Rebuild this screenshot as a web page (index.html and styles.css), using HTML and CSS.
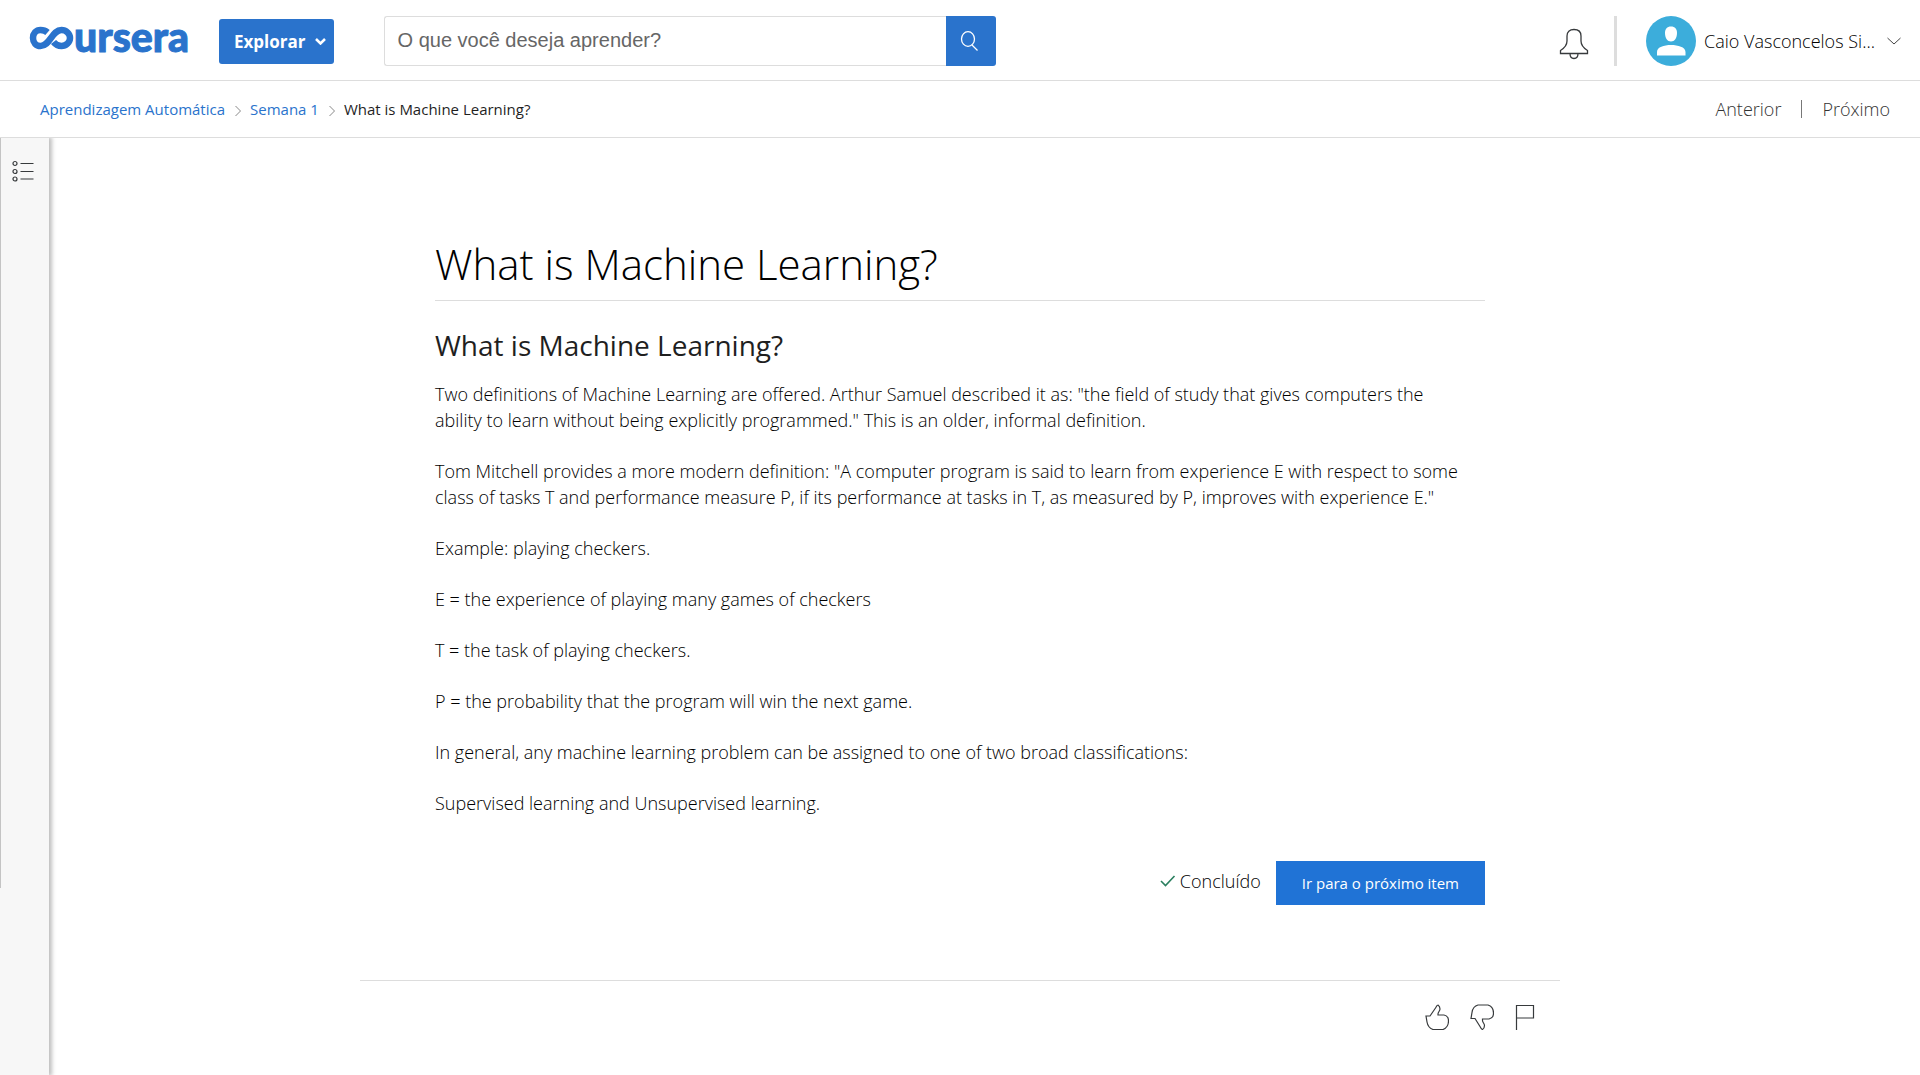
FILE: index.html
```html
<!DOCTYPE html>
<html lang="pt-BR">
<head>
<meta charset="utf-8">
<meta name="viewport" content="width=device-width, initial-scale=1">
<title>What is Machine Learning? | Coursera</title>
<link rel="stylesheet" href="styles.css">
</head>
<body>
<header class="topbar">
  <a class="logo" href="#" aria-label="Coursera">
    <svg class="logo-mark" width="45" height="24" viewBox="0 0 45 24" fill="none" stroke="currentColor" stroke-width="6.500" aria-hidden="true">
      <path d="M18.500 6.500C16.500 4.700 14 4 11.500 4C7 4 4 7.500 4 12C4 16.500 7 20 11.500 20C21 20 23 4 32.500 4C37 4 41 7.500 41 12C41 16.500 37 20 32.500 20C29 20 26.500 18.500 24.500 16"/>
    </svg><span class="logo-text">ursera</span>
  </a>
  <button class="explore" type="button">Explorar
    <svg width="11" height="8" viewBox="0 0 11 8" fill="none" stroke="currentColor" stroke-width="2.500" aria-hidden="true"><path d="M1 2L5.500 6.500L10 2"/></svg>
  </button>
  <form class="search" role="search">
    <input class="search-input" type="text" placeholder="O que você deseja aprender?" aria-label="O que você deseja aprender?">
    <button class="search-button" type="button" aria-label="Pesquisar">
      <svg width="20" height="22" viewBox="0 0 20 22" fill="none" stroke="currentColor" stroke-width="1.300" aria-hidden="true"><ellipse cx="8" cy="9" rx="6.500" ry="7.300"/><path d="M12 15L17.500 20.500"/></svg>
    </button>
  </form>
  <div class="account">
    <button class="plain bell" type="button" aria-label="Notificações">
      <svg width="30" height="32" viewBox="0 0 30 32" fill="none" stroke="currentColor" stroke-width="1.300" aria-hidden="true"><path d="M1.500 25.500V22.500C5.500 20 8 17 8 13V8C8 4 10.500 1.500 15 1.500S22 4 22 8V13C22 17 24.500 20 28.500 22.500V25.500ZM11 25.500C11 28.500 12.500 30.500 15 30.500S19 28.500 19 25.500"/></svg>
    </button>
    <span class="divider"></span>
    <button class="plain user" type="button">
      <svg width="50" height="50" viewBox="0 0 50 50" aria-hidden="true"><circle cx="25" cy="25" r="25" fill="#3caddb"/><path fill="#fff" d="M25 10.500C29 10.500 31 13 31 17C31 22 28.500 25.500 25 25.500S19 22 19 17C19 13 21 10.500 25 10.500ZM11 39.500V36C11 31 18 29 25 29S39.500 31 39.500 36V39.500Z"/></svg>
      <span class="user-name">Caio Vasconcelos Si...</span>
      <svg width="14" height="8" viewBox="0 0 14 8" fill="none" stroke="#444" aria-hidden="true"><path d="M.5 1L7 7L13.500 1"/></svg>
    </button>
  </div>
</header>

<div class="subbar">
  <nav class="crumbs" aria-label="Navegação estrutural">
    <a href="#">Aprendizagem Automática</a>
    <svg class="crumb-arrow" width="7" height="12" viewBox="0 0 7 12" aria-hidden="true"><path d="M1.500 1L6.500 6L1.500 11"/></svg>
    <a href="#">Semana 1</a>
    <svg class="crumb-arrow" width="7" height="12" viewBox="0 0 7 12" aria-hidden="true"><path d="M1.500 1L6.500 6L1.500 11"/></svg>
    <span>What is Machine Learning?</span>
  </nav>
  <nav class="pager" aria-label="Itens">
    <a href="#">Anterior</a>
    <span class="pager-line"></span>
    <a href="#">Próximo</a>
  </nav>
</div>

<div class="workspace">
  <aside class="rail">
    <button class="plain rail-button" type="button" aria-label="Abrir menu do curso">
      <svg width="22" height="22" viewBox="0 0 22 22" fill="none" stroke="currentColor" stroke-width="1.200" aria-hidden="true"><circle cx="3" cy="3.500" r="2"/><circle cx="3" cy="11.500" r="2"/><circle cx="3" cy="19" r="2"/><path d="M8.500 3.500H21.500M8.500 11.500H21.500M8.500 19H21.500"/></svg>
    </button>
  </aside>
  <main class="page">
    <article class="reading">
      <h1>What is Machine Learning?</h1>
      <h2>What is Machine Learning?</h2>
      <p>Two definitions of Machine Learning are offered. Arthur Samuel described it as: "the field of study that gives computers the ability to learn without being explicitly programmed." This is an older, informal definition.</p>
      <p>Tom Mitchell provides a more modern definition: "A computer program is said to learn from experience E with respect to some class of tasks T and performance measure P, if its performance at tasks in T, as measured by P, improves with experience E."</p>
      <p>Example: playing checkers.</p>
      <p>E = the experience of playing many games of checkers</p>
      <p>T = the task of playing checkers.</p>
      <p>P = the probability that the program will win the next game.</p>
      <p>In general, any machine learning problem can be assigned to one of two broad classifications:</p>
      <p>Supervised learning and Unsupervised learning.</p>
      <div class="complete">
        <span class="done"><svg width="16" height="12" viewBox="0 0 16 12" fill="none" stroke="#2a7f5f" stroke-width="1.600" aria-hidden="true"><path d="M1 6L5.500 10.500L14.500 1"/></svg>Concluído</span>
        <button class="next" type="button">Ir para o próximo item</button>
      </div>
    </article>
    <div class="feedback">
      <button class="plain" type="button" aria-label="Gostei">
        <svg width="24" height="26" viewBox="0 0 24 26" aria-hidden="true"><path d="M1 12H5L10.500 4C11.500 2 12 1 13 1C14.500 2 15 3 15 5C15 7 13 8 13 10V11H19C22 11.500 23.500 14 23.500 17C23.500 21 21 24.500 18 25.500H8C4 24 2.500 21 2 18Z"/></svg>
      </button>
      <button class="plain" type="button" aria-label="Não gostei">
        <svg width="24" height="26" viewBox="0 0 24 26" aria-hidden="true"><path d="M1 14.500H5L10 22.500C11 24.500 11.500 25.500 12.500 25.500C14 24.500 14.500 23.500 14.500 21.500C14.500 19.500 12.500 18.500 12.500 16.500V15H19C22 14.500 23.500 12 23.500 9C23.500 5 21 2 18 1H8C4 2 2.500 5 2 8.500Z"/></svg>
      </button>
      <button class="plain" type="button" aria-label="Sinalizar">
        <svg width="20" height="26" viewBox="0 0 20 26" aria-hidden="true"><path d="M1.500 26V1.500H18.500V14H1.500"/></svg>
      </button>
    </div>
  </main>
</div>
</body>
</html>
```
FILE: styles.css
```css
* {
  box-sizing: border-box;
}

body {
  display: flex;
  flex-direction: column;
  min-height: 100vh;
  margin: 0;
  background: #fff;
  color: #000;
  font-family: "Open Sans", "Noto Sans", sans-serif;
  font-size: 18px;
  font-weight: 300;
  line-height: 26px;
}

a {
  color: #2a73cc;
  text-decoration: none;
}

button {
  border: 0;
  font-family: inherit;
  cursor: pointer;
}

svg {
  display: block;
  flex: none;
}

.plain {
  padding: 0;
  background: none;
  color: #373a3c;
}

.topbar {
  display: flex;
  align-items: center;
  padding: 16px 19px 14px 29px;
  border-bottom: 1px solid #ddd;
}

.logo {
  display: flex;
  align-items: flex-end;
  width: 190px;
  padding-bottom: 8px;
}

.logo-text {
  font-family: Lato, sans-serif;
  font-size: 41px;
  font-weight: 900;
  line-height: 40px;
  -webkit-text-stroke: 1px currentColor;
}

.logo-mark {
  margin-bottom: 7px;
}

.explore {
  display: flex;
  align-items: center;
  gap: 9px;
  height: 45px;
  padding: 0 8px 0 15px;
  border-radius: 3px;
  background: #2a73cc;
  color: #fff;
  font-size: 17px;
  font-weight: 700;
}

.search {
  display: flex;
  width: 612px;
  height: 50px;
  margin-left: 50px;
}

.search-input {
  flex: 1;
  min-width: 0;
  padding: 0 13px 2px;
  border: 1px solid #ddd;
  border-right: 0;
  border-radius: 3px 0 0 3px;
  font-family: "Liberation Sans", Arial, sans-serif;
  font-size: 20px;
}

.search-input::placeholder {
  color: #666;
  opacity: 1;
}

.search-button {
  display: flex;
  align-items: center;
  justify-content: center;
  width: 50px;
  padding: 0 2px 0 0;
  border-radius: 0 3px 3px 0;
  background: #2a73cc;
  color: #fff;
}

.account {
  display: flex;
  align-items: center;
  margin-left: auto;
}

.bell {
  padding-top: 6px;
}

.divider {
  width: 3px;
  height: 50px;
  margin: 0 29px 0 25px;
  background: #ddd;
}

.user {
  display: flex;
  align-items: center;
  color: #000;
  font-size: 18px;
  font-weight: 300;
}

.user-name {
  margin: 0 12px 0 8px;
}

.subbar {
  display: flex;
  align-items: center;
  justify-content: space-between;
  height: 57px;
  padding: 0 30px 0 40px;
  border-bottom: 1px solid #ddd;
}

.crumbs {
  display: flex;
  align-items: center;
  gap: 9px;
  color: #1f1f1f;
  font-size: 15px;
  font-weight: 400;
}

.crumb-arrow {
  margin-top: 4px;
  fill: none;
  stroke: #888;
}

.pager {
  display: flex;
  align-items: center;
  gap: 20px;
}

.pager a {
  color: #333;
}

.pager-line {
  width: 1px;
  height: 18px;
  background: #777;
}

.workspace {
  display: flex;
  flex: 1;
  padding-right: 49px;
}

.rail {
  flex: none;
  width: 49px;
  padding: 22px 0 0 12px;
  background: linear-gradient(#c4c4c4, #c4c4c4) 0 0 / 1px 750px no-repeat #f7f7f7;
  box-shadow: 2px 0 4px 1px rgba(0, 0, 0, .25);
  clip-path: inset(0 -8px 0 0);
}

.page {
  width: 100%;
  max-width: 1200px;
  margin: 0 auto;
  padding-top: 96px;
}

.reading {
  padding: 0 75px 75px;
}

h1 {
  margin: 0 0 26px;
  padding-bottom: 6px;
  border-bottom: 1px solid #ddd;
  font-size: 42px;
  font-weight: 300;
  line-height: 60px;
}

h2 {
  margin: 0 0 18px;
  color: #1f1f1f;
  font-size: 28px;
  font-weight: 400;
  line-height: 36px;
}

p {
  margin: 0 0 25px;
  padding-right: 20px;
}

.complete {
  display: flex;
  align-items: center;
  justify-content: flex-end;
  gap: 15px;
  padding-top: 20px;
}

.done {
  display: flex;
  align-items: center;
  gap: 4px;
  padding-bottom: 4px;
}

.next {
  height: 44px;
  padding: 0 26px;
  background: #2073d6;
  color: #fff;
  font-size: 15px;
}

.feedback {
  display: flex;
  justify-content: flex-end;
  gap: 21px;
  padding: 23px 25px;
  border-top: 1px solid #ddd;
}

.feedback path {
  fill: none;
  stroke: #373a3c;
  stroke-width: 1.2;
}
```
